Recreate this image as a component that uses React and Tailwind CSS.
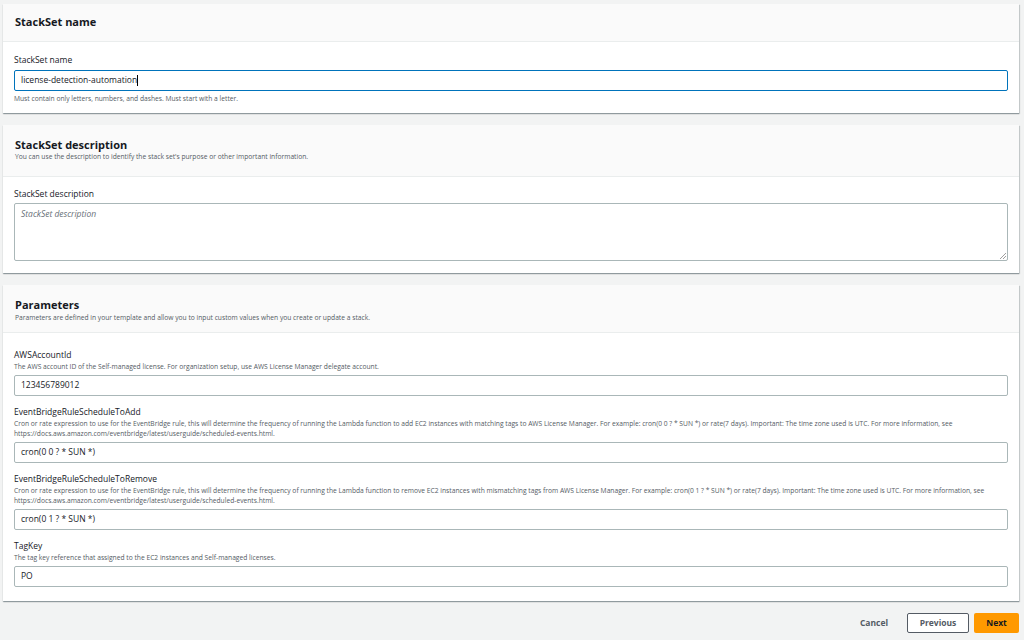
export default function App() {
  const f = { fontFamily: '"Open Sans", "Liberation Sans", sans-serif' };
  const Input = ({ v, focus }) => (
    <div className={`h-[21px] flex items-center px-[6px] text-[8.5px] text-[#16191f] bg-white rounded-[2px] ${focus ? "border-[1.5px] border-[#0073bb]" : "border border-[#aab7b8]"}`}>
      {v}{focus && <span className="w-px h-[11px] bg-black" />}
    </div>
  );
  const Param = ({ label, desc, v, mt }) => (
    <div className={mt}>
      <div className="text-[8.5px] text-[#16191f] leading-[12px]">{label}</div>
      <div className="text-[6.7px] text-[#545b64] leading-[10px] mt-[1px] pr-[10px]">{desc}</div>
      <div className="mt-[3px]"><Input v={v} /></div>
    </div>
  );
  return (
    <div style={f} className="w-[1024px] h-[640px] bg-[#f2f3f3] px-[3px] pt-[4px] overflow-hidden">
      <div className="w-[1016px]">
        <div className="bg-white shadow-[0_1px_1px_rgba(0,28,36,0.3),1px_1px_1px_rgba(0,28,36,0.15)] h-[109px]">
          <div className="h-[38px] bg-[#fafafa] border-b border-[#eaeded] flex items-center px-[12px]">
            <div className="text-[11px] font-bold text-[#16191f]">StackSet name</div>
          </div>
          <div className="px-[11px] pt-[12px]">
            <div className="text-[8.5px] text-[#16191f] leading-[12px]">StackSet name</div>
            <div className="mt-[4px]"><Input v="license-detection-automation" focus /></div>
            <div className="text-[6.7px] text-[#545b64] mt-[3px]">Must contain only letters, numbers, and dashes. Must start with a letter.</div>
          </div>
        </div>
        <div className="bg-white shadow-[0_1px_1px_rgba(0,28,36,0.3),1px_1px_1px_rgba(0,28,36,0.15)] h-[148px] mt-[12px]">
          <div className="h-[52px] bg-[#fafafa] border-b border-[#eaeded] px-[12px] pt-[13px]">
            <div className="text-[11px] font-bold text-[#16191f] leading-[14px]">StackSet description</div>
            <div className="text-[6.7px] text-[#545b64] leading-[10px]">You can use the description to identify the stack set's purpose or other important information.</div>
          </div>
          <div className="px-[11px] pt-[11px]">
            <div className="text-[8.5px] text-[#16191f] leading-[12px]">StackSet description</div>
            <div className="mt-[3px] h-[58px] border border-[#aab7b8] rounded-[2px] px-[6px] pt-[4px] text-[8.5px] italic text-[#687078] relative">
              StackSet description
              <svg className="absolute right-[1px] bottom-[1px]" width="6" height="6" viewBox="0 0 6 6"><path d="M6 0L0 6M6 3L3 6" stroke="#888" strokeWidth="0.8" /></svg>
            </div>
          </div>
        </div>
        <div className="bg-white shadow-[0_1px_1px_rgba(0,28,36,0.3),1px_1px_1px_rgba(0,28,36,0.15)] h-[316px] mt-[12px]">
          <div className="h-[48px] bg-[#fafafa] border-b border-[#eaeded] px-[12px] pt-[13px]">
            <div className="text-[11px] font-bold text-[#16191f] leading-[14px]">Parameters</div>
            <div className="text-[6.7px] text-[#545b64] leading-[10px] mt-[1px]">Parameters are defined in your template and allow you to input custom values when you create or update a stack.</div>
          </div>
          <div className="px-[11px] pt-[16px]">
            <Param label="AWSAccountId" desc="The AWS account ID of the Self-managed license. For organization setup, use AWS License Manager delegate account." v="123456789012" />
            <Param mt="mt-[10px]" label="EventBridgeRuleScheduleToAdd" desc="Cron or rate expression to use for the EventBridge rule, this will determine the frequency of running the Lambda function to add EC2 instances with matching tags to AWS License Manager. For example: cron(0 0 ? * SUN *) or rate(7 days). Important: The time zone used is UTC. For more information, see https://docs.aws.amazon.com/eventbridge/latest/userguide/scheduled-events.html." v="cron(0 0 ? * SUN *)" />
            <Param mt="mt-[10px]" label="EventBridgeRuleScheduleToRemove" desc="Cron or rate expression to use for the EventBridge rule, this will determine the frequency of running the Lambda function to remove EC2 instances with mismatching tags from AWS License Manager. For example: cron(0 1 ? * SUN *) or rate(7 days). Important: The time zone used is UTC. For more information, see https://docs.aws.amazon.com/eventbridge/latest/userguide/scheduled-events.html." v="cron(0 1 ? * SUN *)" />
            <Param mt="mt-[10px]" label="TagKey" desc="The tag key reference that assigned to the EC2 instances and Self-managed licenses." v="PO" />
          </div>
        </div>
        <div className="flex justify-end items-center mt-[12px] gap-[5px] text-[8.5px] font-bold">
          <div className="text-[#545b64] px-[14px]">Cancel</div>
          <div className="h-[20px] w-[62px] border border-[#545b64] bg-white text-[#545b64] flex items-center justify-center rounded-[2px]">Previous</div>
          <div className="h-[20px] w-[45px] bg-[#ff9900] text-[#16191f] flex items-center justify-center rounded-[2px]">Next</div>
        </div>
      </div>
    </div>
  );
}
